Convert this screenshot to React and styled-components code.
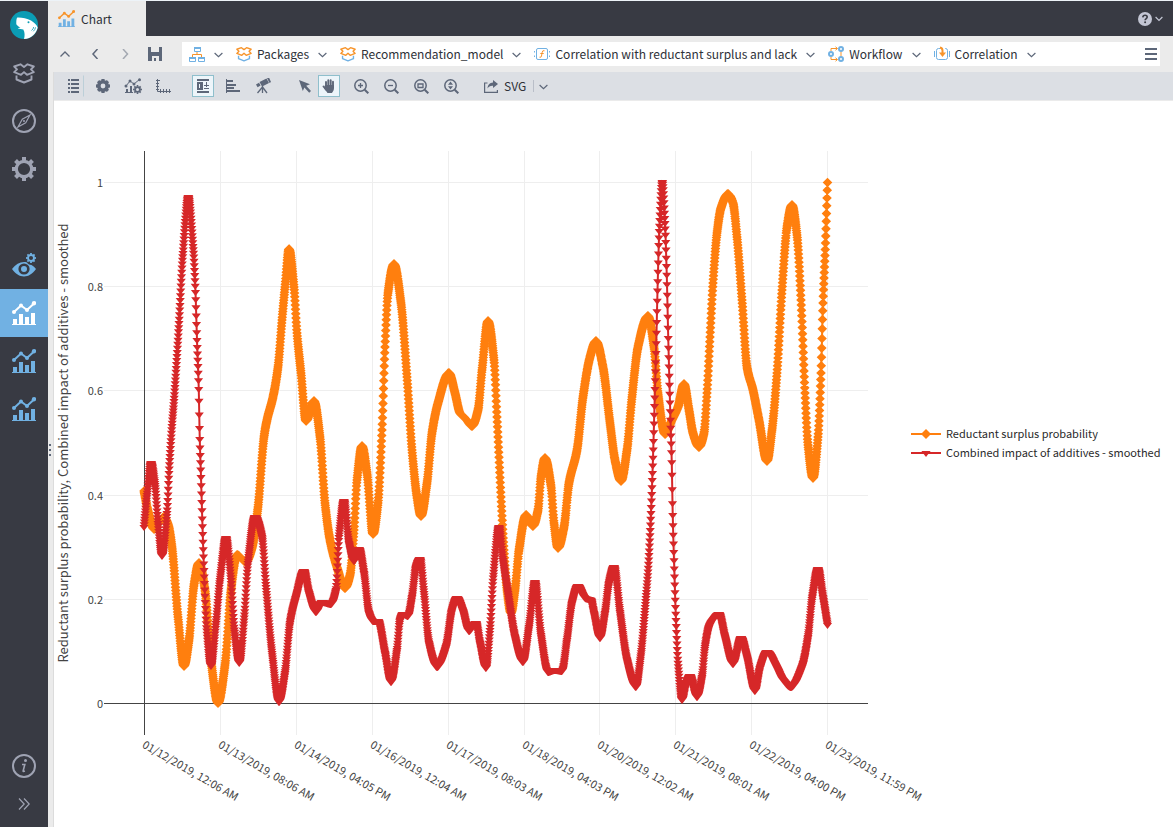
import React from "react";
import styled, { createGlobalStyle } from "styled-components";

const color = {
  dark: "#383a43",
  frame: "#ebebeb",
  bar: "#dcdfe4",
  blue: "#71b1e3",
  orange: "#f7942b",
  slate: "#5d6779",
  muted: "#9fa3b3",
  text: "#2e3138",
  seriesA: "#ff7f0e",
  seriesB: "#d62728",
};
const font = `"Noto Sans CJK SC", "Noto Sans", sans-serif`;

const GlobalStyle = createGlobalStyle`
  *, *::before, *::after { box-sizing: border-box; }
  body { margin: 0; background: #fff; color: ${color.text}; font: 12px/20px ${font}; }
  button { font: inherit; color: inherit; border: 0; padding: 0; margin: 0; background: none; cursor: pointer; }
  svg { display: block; flex: none; }
`;

/* ---------- layout ---------- */

const Page = styled.div`
  display: flex;
  min-height: 100vh;
  border-top: 1px solid #edf3f8;
`;
const Sidebar = styled.nav`
  display: flex;
  flex-direction: column;
  flex: 0 0 48px;
  padding-bottom: 9px;
  background: ${color.dark};
`;
const SideButton = styled.button`
  display: flex;
  align-items: center;
  justify-content: center;
  height: ${(p) => (p.$short ? 28 : 48)}px;
  color: ${(p) => (p.$active ? "#fff" : p.$tool ? color.blue : color.muted)};
  background: ${(p) => (p.$active ? color.blue : "transparent")};
`;
const SideGap = styled.div`
  height: 48px;
  flex: ${(p) => (p.$grow ? "1 0 0px" : "none")};
`;
const Main = styled.div`
  display: flex;
  flex-direction: column;
  flex: 1;
  min-width: 0;
  background: ${color.frame};
`;
const TitleBar = styled.header`
  display: flex;
  justify-content: space-between;
  align-items: stretch;
  height: 35px;
  padding-right: 10px;
  background: ${color.dark};
`;
const Tab = styled.button`
  display: flex;
  align-items: center;
  gap: 6px;
  width: 98px;
  padding-left: 10px;
  background: ${color.frame};
`;
const HelpButton = styled.button`
  display: flex;
  align-items: center;
  gap: 3px;
  color: #c3c6d4;
`;
const PathRow = styled.div`
  display: flex;
  align-items: center;
  height: 36px;
  padding: 0 13px 0 9px;
`;
const NavButtons = styled.div`
  display: flex;
  align-items: center;
  gap: 14px;
  width: 125px;
  color: ${color.slate};
`;
const NavButton = styled.button`
  display: flex;
  justify-content: center;
  width: 16px;
  opacity: ${(p) => (p.$faint ? 0.5 : 1)};
`;
const PathBox = styled.nav`
  display: flex;
  align-items: center;
  flex: 1;
  min-width: 0;
  height: 24px;
  gap: 13px;
  padding: 0 3px 0 7px;
  background: #fff;
`;
const Crumb = styled.div`
  display: flex;
  align-items: center;
  gap: 9px;
  white-space: nowrap;
  color: ${color.slate};
`;
const CrumbLink = styled.a`
  display: flex;
  align-items: center;
  gap: 5px;
  color: ${color.text};
  text-decoration: none;
`;
const MenuButton = styled.button`
  margin-left: auto;
  color: ${color.slate};
`;
const Body = styled.div`
  display: flex;
  flex: 1;
`;
const Splitter = styled.div`
  display: flex;
  flex-direction: column;
  justify-content: center;
  gap: 3px;
  flex: 0 0 6px;
  padding-left: 1px;
  border-right: 1px solid #dcdcdc;
`;
const Dot = styled.span`
  width: 2px;
  height: 2px;
  background: ${color.slate};
`;
const Editor = styled.div`
  display: flex;
  flex-direction: column;
  flex: 1;
  min-width: 0;
`;
const Toolbar = styled.div`
  display: flex;
  align-items: center;
  height: 29px;
  padding-left: 8px;
  background: ${color.bar};
  border-bottom: 1px solid ${color.frame};
  color: ${color.slate};
`;
const ToolGroup = styled.div`
  display: flex;
  align-items: center;
  gap: ${(p) => (p.$tight ? 2 : 8)}px;
  margin-right: ${(p) => p.$after || 0}px;
`;
const ToolButton = styled.button`
  display: flex;
  align-items: center;
  justify-content: center;
  width: 22px;
  height: 22px;
  border: 1px solid ${(p) => (p.$on ? "#8fbfcc" : "transparent")};
  border-right-color: ${(p) => (p.$on ? "#8fbfcc" : p.$divided ? "#bccfd8" : "transparent")};
  background: ${(p) => (p.$on ? "#edf5fa" : "transparent")};
`;
const ExportButton = styled.button`
  display: flex;
  align-items: center;
  gap: 6px;
  padding-right: 7px;
  color: ${color.text};
`;
const ExportMenu = styled.button`
  display: flex;
  align-items: center;
  height: 12px;
  padding-left: 5px;
  border-left: 1px solid #b9bec8;
`;
const ChartPanel = styled.main`
  display: flex;
  align-items: flex-start;
  flex: 1;
  background: #fff;
`;
const Plot = styled.svg`
  flex: 1 1 0;
  min-width: 0;
  height: auto;
  overflow: visible;
  font-family: ${font};
  fill: #444;
`;
const Legend = styled.ul`
  flex: 0 0 262px;
  margin: 0;
  padding: 323px 0 0;
  list-style: none;
  font-size: 11px;
  line-height: 19px;
  color: #2a2a2a;
`;
const LegendItem = styled.li`
  display: flex;
  align-items: center;
  gap: 5px;
  white-space: nowrap;
`;

/* ---------- icons ---------- */

const Svg = ({ w = 16, h = w, children, ...rest }) => (
  <svg width={w} height={h} viewBox={`0 0 ${w} ${h}`} fill="none" aria-hidden="true" {...rest}>
    {children}
  </svg>
);
const Chevron = ({ size = 9 }) => (
  <Svg w={size} h={9} stroke="currentColor" strokeWidth="1.2">
    <path d={size === 9 ? "M.6 3l3.9 3.6L8.4 3" : "M.6 3l3.4 3.4L7.4 3"} />
  </Svg>
);
const Shark = () => (
  <Svg w={28}>
    <circle cx="14" cy="14" r="14" fill="#0b9cb4" />
    <path
      fill="#fff"
      d="M6.3 13.2C6.2 10 6.4 7.600 7.300 6.500C11.500 6.300 17 7.300 21 9.500C24.500 11.500 27 14.500 27.700 16.500C26.700 22 21.500 27.800 14 28C14.800 25.500 15 21.500 13.300 18.600C11.500 18.100 9.500 18 7.800 17.600C8 17 9 16.800 10.500 16.700C9 15.500 7.300 14.800 6.300 13.200Z"
    />
    <circle cx="18.500" cy="11.300" r="1" fill="#0b9cb4" />
    <path d="M21.500 19.500q2-1.500 2.200-3.500M23.300 20.300q2-1.800 2.200-4" stroke="#0b9cb4" strokeWidth=".8" />
  </Svg>
);
const BoxIcon = ({ top, side, w = 16 }) => (
  <svg width={w} height={w} viewBox="0 0 22 22" fill="none" strokeWidth="1.900" strokeLinejoin="round" aria-hidden="true">
    <path stroke={side} d="M3.500 13.500v4L11 20.500l7.500-3v-4" />
    <path stroke={top} d="M11 5 7.500 2.300 1.200 4.500 4 7.300 1.200 10.200 8 12.800l3-2.700 3 2.700 6.800-2.600L18 7.300l2.800-2.800-6.300-2.200z" />
  </svg>
);
const Compass = () => (
  <Svg w={24}>
    <circle cx="12" cy="12" r="11" stroke="currentColor" strokeWidth="2" />
    <path d="M18 6l-4.300 7.700L6 18l4.300-7.700z" stroke="currentColor" strokeWidth="1.200" />
    <circle cx="12" cy="12" r="1" fill="currentColor" />
  </Svg>
);
const teeth = (c, r, w, h) =>
  [0, 45, 90, 135, 180, 225, 270, 315].map((a) => (
    <rect key={a} x={c - w / 2} y={c - r} width={w} height={h} fill="currentColor" transform={`rotate(${a} ${c} ${c})`} />
  ));
const Gear = () => (
  <Svg w={24}>
    <circle cx="12" cy="12" r="7.700" stroke="currentColor" strokeWidth="3.200" />
    {teeth(12, 12, 4, 3.500)}
  </Svg>
);
const Eye = () => (
  <Svg w={24}>
    <path
      fillRule="evenodd"
      fill="currentColor"
      d="M0 16C3.500 11.500 7.500 9 12 9c1 0 2 .1 3 .4.8 1.600 2.200 2.400 4.500 2.500C21.300 13 22.800 14.400 24 16c-3.500 4.800-7.500 7.500-12 7.500S3.500 20.800 0 16zm12-5.600a5.600 5.600 0 1 0 0 11.200 5.600 5.600 0 0 0 0-11.200z"
    />
    <circle cx="12" cy="16" r="3" fill="currentColor" />
    <g transform="translate(14 0)">
      <circle cx="5" cy="5" r="3" stroke="currentColor" strokeWidth="1.900" />
      {teeth(5, 5, 1.800, 1.500)}
    </g>
  </Svg>
);
const ChartIcon = ({ w = 24, line = "currentColor", bars = "currentColor" }) => (
  <svg width={w} height={w} viewBox="0 0 24 24" fill="none" aria-hidden="true">
    <path d="M2 11l7-6.500L15 9l7-6.500" stroke={line} strokeWidth="2" />
    <g fill={line}>
      <circle cx="2" cy="11" r="2" />
      <circle cx="9" cy="4.500" r="2" />
      <circle cx="15" cy="9" r="2" />
      <circle cx="22" cy="2.200" r="2.200" />
    </g>
    <path fill={bars} d="M1 18h4v5H1zM7 13h4v10H7zM13 16h4v7h-4zM19 12h4v11h-4zM0 23h24v1H0z" />
  </svg>
);
const Info = () => (
  <Svg w={24}>
    <circle cx="12" cy="12" r="11" stroke="currentColor" strokeWidth="2" />
    <circle cx="13.500" cy="6.500" r="1.500" fill="currentColor" />
    <path d="M10 10.500h2.800l-1.700 6.500q0 .8 1.800 0" stroke="currentColor" strokeWidth="1.600" />
  </Svg>
);
const Expand = () => (
  <Svg w={12} stroke="currentColor" strokeWidth="1.200">
    <path d="M1 .5L6.200 6 1 11.500M6 .5L11.200 6 6 11.500" />
  </Svg>
);
const Help = () => (
  <Svg w={14}>
    <circle cx="7" cy="7" r="7" fill="currentColor" />
    <path d="M4.800 5.300q.2-2 2.300-2 2.100 0 2.100 1.800 0 1-1.200 1.700-.9.600-.9 1.500" stroke={color.dark} strokeWidth="1.600" />
    <circle cx="7.100" cy="10.300" r="1" fill={color.dark} />
  </Svg>
);
const Save = () => (
  <Svg w={14}>
    <path fill="currentColor" fillRule="evenodd" d="M0 0h3v5h8V0h3v14H0zM4 9v5h2v-3h2v3h3V9z" />
  </Svg>
);
const Network = () => (
  <Svg>
    <path d="M8 6v3M3.500 11V8.500h9V11" stroke={color.orange} />
    <g stroke={color.blue}>
      <path d="M5.500 1.500h6v4h-6zM.5 11.500h6v4h-6zM9.500 11.500h6v4h-6z" />
      <path strokeWidth="2" d="M5 2h7M0 12h7M9 12h7" />
    </g>
  </Svg>
);
const Fn = () => (
  <Svg>
    <rect x="2.500" y="2.500" width="11" height="11" rx="1.500" stroke={color.blue} />
    <path d="M.5 5v1.500M.5 9.500V11M15.500 5v1.500M15.500 9.500V11" stroke={color.blue} />
    <path d="M10.500 4.800q-2-.8-2.300 1.400L7.500 10q-.3 1.800-2 1.200M6.300 7.500h3.400" stroke={color.orange} />
  </Svg>
);
const Flow = () => (
  <Svg>
    <path d="M3 5V2.500h6M3 11v2.500h6M13 5v6M7.500.8 9.500 2.500 7.500 4.200M7.500 11.800l2 1.700-2 1.700" stroke={color.orange} />
    <g stroke={color.blue} strokeWidth="2">
      <circle cx="3" cy="8" r="2" />
      <circle cx="13" cy="3" r="2" />
      <circle cx="13" cy="13" r="2" />
    </g>
  </Svg>
);
const Node = () => (
  <Svg>
    <path d="M6 2.500H4.500a2 2 0 0 0-2 2v7a2 2 0 0 0 2 2h7a2 2 0 0 0 2-2v-7a2 2 0 0 0-2-2H11M.5 5v6M15.500 5v6" stroke={color.blue} />
    <path d="M6 1.500q2.500.5 2.500 3V8" stroke={color.orange} strokeWidth="2" />
    <path d="M5 6.500h7L8.500 11z" fill={color.orange} />
  </Svg>
);
const Burger = () => (
  <Svg w={12}>
    <path fill="currentColor" d="M0 0h12v2H0zM0 5h12v2H0zM0 10h12v2H0z" />
  </Svg>
);
const ListIcon = () => (
  <Svg w={12} h={14}>
    <path fill="currentColor" d="M1 0h2v2H1zM1 4h2v2H1zM1 8h2v2H1zM1 12h2v2H1zM4 0h8v2H4zM4 4h8v2H4zM4 8h8v2H4zM4 12h8v2H4z" />
  </Svg>
);
const SmallGear = () => (
  <Svg w={14}>
    <circle cx="7" cy="7" r="4.200" stroke="currentColor" strokeWidth="3.600" />
    {teeth(7, 7, 3.200, 3)}
  </Svg>
);
const ChartGear = () => (
  <Svg w={18} h={16}>
    <path d="M2 8l4-5 4 3 6-5" stroke="currentColor" />
    <g fill="currentColor">
      <circle cx="2" cy="8" r="1.500" />
      <circle cx="6" cy="3" r="1.500" />
      <circle cx="10" cy="6" r="1.500" />
      <circle cx="15.500" cy="1.700" r="1.500" />
      <path d="M2 11h2v4H2zM6 8h2v7H6zM1 14h8v1H1z" />
    </g>
    <g transform="translate(9 7)">
      <circle cx="4.500" cy="4.500" r="2.400" stroke="currentColor" strokeWidth="1.800" />
      {teeth(4.500, 4.500, 1.600, 1.800)}
    </g>
  </Svg>
);
const Axis = () => (
  <Svg w={15} stroke="currentColor">
    <path d="M1.500 0v12.500H15M0 1.500h4M0 4.500h3M0 7.500h3M0 10.500h3M4.500 10v4M7.500 10v4M10.500 10v4M13.500 10v4" />
  </Svg>
);
const Frame = () => (
  <Svg w={14}>
    <path fill="currentColor" d="M1 0h12v2H1zM1 12h12v2H1zM1 3h6v8H1zM10 3h1v3h2v1h-2v1h-1V7H8V6h2zM8 9h5v1H8z" />
    <path fill="#edf5fa" d="M3 5h1v4H3z" />
  </Svg>
);
const Bars = () => (
  <Svg w={14}>
    <path fill="currentColor" d="M0 0h1v14H0zM1 1h6v2H1zM1 5h9v2H1zM1 8h7v2H1zM1 11h13v2H1z" />
  </Svg>
);
const Telescope = () => (
  <Svg w={16}>
    <path fill="currentColor" d="M1 6.500l3-1.700 1.600 2.700-3 1.700zM4.500 4l7-3.600L14 5 7 8.500zM12 0l2-.5L16 4l-1.500 1z" />
    <path d="M7.500 8v7M7.500 9l-5 6M7.500 9l4.500 6" stroke="currentColor" strokeWidth="1.300" />
  </Svg>
);
const Pointer = () => (
  <Svg w={12} h={13}>
    <path fill="currentColor" d="M0 0l11 4.200-3.800 1.600L12 11l-1.800 1.800L5.400 7.500 3.800 11z" />
  </Svg>
);
const Hand = () => (
  <Svg w={14}>
    <path
      d="M4 8V3M6.300 7V1.200M8.700 7V1.200M11 8V2.800M1.500 7.500L4 10.500"
      stroke="currentColor"
      strokeWidth="1.900"
      strokeLinecap="round"
    />
    <path fill="currentColor" d="M3 6h9v3c0 2-1 3.500-2 5H5.500C4.500 12.500 3 11 2 9z" />
  </Svg>
);
const Lens = ({ children }) => (
  <Svg w={15} stroke="currentColor">
    <circle cx="6.500" cy="6.500" r="5.700" strokeWidth="1.500" />
    <path d="M10.700 10.700l3.600 3.600" strokeWidth="2" />
    {children}
  </Svg>
);
const Share = () => (
  <Svg w={14} h={13} color={color.slate}>
    <path d="M3.500 3H.6v9.400h12.800V10" stroke="currentColor" strokeWidth="1.200" />
    <path fill="currentColor" d="M9 0l5 4-5 4V5.700C6.500 5.500 4.800 6.300 3.500 8.500 3.700 4.500 5.800 2.600 9 2.400z" />
  </Svg>
);

/* ---------- chart ---------- */

// Extremes and inflections of each smoothed signal, as [x, y] in plot units.
const surplus = [
  [144, 491], [149, 515], [154, 529], [159, 522], [164, 517], [168, 524], [172, 547], [178, 617], [184, 666], [189, 640], [194, 585], [199, 563],
  [205, 590], [211, 660], [218, 703], [225, 665], [231, 590], [237, 555], [246, 562], [252, 548], [258, 507], [264, 437], [267, 420], [273, 397],
  [278, 367], [282, 320], [285, 287], [289, 249], [294, 287], [297, 333], [301, 373], [306, 421], [314, 401], [320, 437], [325, 503],
  [330, 540], [337, 567], [345, 588], [350, 575], [354, 530], [357, 480], [362, 446], [367, 473], [373, 534], [378, 503], [382, 430],
  [385, 347], [388, 293], [394, 264], [401, 303], [407, 377], [412, 450], [417, 497], [421, 516], [427, 483], [432, 433], [438, 403],
  [449, 373], [455, 393], [460, 413], [466, 419], [472, 426], [478, 410], [482, 370], [488, 321], [494, 360], [497, 417], [501, 497],
  [504, 550], [507, 590], [511, 613], [515, 590], [519, 550], [526, 515], [533, 526], [538, 510], [541, 477], [545, 458], [551, 486],
  [554, 523], [558, 548], [564, 527], [569, 483], [577, 450], [583, 397], [590, 357], [596, 341], [603, 367], [610, 423], [615, 460],
  [621, 481], [627, 450], [632, 397], [638, 347], [648, 316], [654, 347], [658, 393], [665, 434], [672, 420], [678, 407], [684, 384],
  [689, 410], [693, 433], [699, 447], [704, 433], [707, 393], [710, 337], [713, 283], [717, 233], [721, 208], [728, 194], [733, 203],
  [737, 237], [742, 300], [747, 367], [753, 390], [759, 420], [767, 461], [772, 430], [777, 373], [782, 290], [787, 227], [792, 205],
  [797, 235], [801, 300], [805, 393], [808, 445], [813, 478], [818, 437], [821, 373], [823, 303], [825.500, 243], [827.500, 182.500],
];
const additives = [
  [144, 527], [147, 495], [151, 463], [155, 485], [158, 523], [162, 556], [167, 513], [169, 473], [171.700, 430], [174.300, 397], [179, 323],
  [182.700, 257], [188.300, 197], [193.300, 250], [195.300, 287], [197, 340], [198.700, 387], [199.700, 437], [201, 477], [202.300, 520],
  [204, 570], [206.700, 630], [211, 666], [216, 623], [220, 580], [226, 538], [231, 580], [234.300, 630], [239.300, 663], [244.300, 617],
  [248, 563], [255, 517], [262, 537], [266, 587], [272, 653], [279, 702], [285, 673], [290, 623], [296, 597], [304, 571], [309, 593],
  [316, 612], [322, 602], [331, 604], [336, 590], [339, 537], [344, 501], [349, 543], [354, 561], [359, 549], [364, 573], [369, 613],
  [373, 621], [378, 621], [385, 653], [391, 682], [397, 650], [400, 620], [403, 614], [408, 616], [412, 597], [416, 567], [420, 559],
  [424, 593], [429, 643], [437, 667], [446, 647], [452, 610], [457, 598], [463, 611], [469, 631], [476, 623], [480, 643], [486, 668],
  [490, 630], [493.300, 577], [499, 527], [503, 560], [508, 593], [515, 637], [523, 662], [529, 627], [535, 582], [541, 635], [548, 672],
  [555, 670], [562, 671], [567, 640], [572, 603], [578, 586], [585, 598], [591, 600], [594, 613], [600, 638], [605, 613], [609, 583],
  [614, 567], [620, 612], [627, 660], [636, 687], [640.700, 657], [645, 610], [648.300, 567], [650.700, 520], [652.700, 467],
  [654.300, 413], [656, 353], [657.700, 283], [659.300, 230], [662.300, 182], [665, 223], [666.700, 273], [668.300, 340], [670.300, 413],
  [671.700, 460], [672.700, 513], [674.300, 570], [676, 620], [678.300, 667], [682, 700], [686, 684], [690, 676], [697, 697], [702, 677],
  [705, 647], [709, 627], [713, 620], [719, 614], [725, 637], [733, 664], [741, 638], [747, 657], [755, 691], [760, 668], [767, 652],
  [777, 668], [783, 680], [791, 687], [802, 667], [808, 637], [812.300, 597], [818, 569], [823, 597], [827.500, 625],
];

// Monotone cubic resampling, so that no overshoot appears between two points.
function resample(points, step) {
  const n = points.length;
  const d = points.slice(1).map(([x, y], i) => (y - points[i][1]) / (x - points[i][0]));
  const m = points.map((_, i) => {
    if (i === 0) return d[0];
    if (i === n - 1) return d[n - 2];
    return d[i - 1] * d[i] <= 0 ? 0 : (2 * d[i - 1] * d[i]) / (d[i - 1] + d[i]);
  });
  const out = [];
  let i = 0;
  for (let x = points[0][0]; x <= points[n - 1][0]; x += step) {
    while (i < n - 2 && x > points[i + 1][0]) i += 1;
    const h = points[i + 1][0] - points[i][0];
    const t = (x - points[i][0]) / h;
    const y =
      (1 + 2 * t) * (1 - t) ** 2 * points[i][1] +
      t * (1 - t) ** 2 * h * m[i] +
      t * t * (3 - 2 * t) * points[i + 1][1] +
      t * t * (t - 1) * h * m[i + 1];
    out.push([x.toFixed(2), y.toFixed(2)]);
  }
  return out;
}
const diamond = "l4.800 4.800 4.800-4.800-4.800-4.800z";
const triangle = "h9.200l-4.600 6z";
const Series = ({ points, stroke, shape, dx, dy }) => {
  const samples = resample(points, 0.25);
  return (
    <g>
      <path d={`M${samples.map((p) => p.join(" ")).join("L")}`} fill="none" stroke={stroke} strokeWidth="2" />
      <path d={samples.map(([x, y]) => `M${(x - dx).toFixed(2)} ${(y - dy).toFixed(2)}${shape}`).join("")} fill={stroke} />
    </g>
  );
};
const Key = ({ stroke, children }) => (
  <svg width="30" height="12" viewBox="0 0 30 12" fill={stroke} aria-hidden="true">
    <path d="M0 6h30" stroke={stroke} strokeWidth="2" />
    {children}
  </svg>
);

const yTicks = [
  ["1", 182.5], ["0.8", 286.5], ["0.6", 390.5], ["0.4", 495.5], ["0.2", 599.5], ["0", 703.5],
];
const xTicks = [
  ["01/12/2019, 12:06 AM", 144.5], ["01/13/2019, 08:06 AM", 220.5], ["01/14/2019, 04:05 PM", 296.5],
  ["01/16/2019, 12:04 AM", 372.5], ["01/17/2019, 08:03 AM", 448.5], ["01/18/2019, 04:03 PM", 524.5],
  ["01/20/2019, 12:02 AM", 599.5], ["01/21/2019, 08:01 AM", 675.5], ["01/22/2019, 04:00 PM", 751.5],
  ["01/23/2019, 11:59 PM", 827.5],
];
const yTitle = "Reductant surplus probability, Combined impact of additives - smoothed";

const CombinedChart = () => (
  <Plot viewBox="54 101 857 726" role="img" aria-label={yTitle}>
    {yTicks.map(([label, y]) => (
      <g key={label}>
        <path d={`M104 ${y}H868`} stroke={label === "0" ? "#444" : "#eee"} />
        <text x="103" y={y + 4} fontSize="11" textAnchor="end">{label}</text>
      </g>
    ))}
    {xTicks.map(([label, x], i) => (
      <g key={label}>
        <path d={`M${x} 151V735`} stroke={i === 0 ? "#444" : "#eee"} />
        <text fontSize="11" transform={`translate(${x - 3} 747) rotate(30)`}>{label}</text>
      </g>
    ))}
    <path d="M104 703.500H868" stroke="#444" />
    <text fontSize="13" textAnchor="middle" transform="translate(68 443) rotate(-90)">{yTitle}</text>
    <Series points={surplus} stroke={color.seriesA} shape={diamond} dx={4.8} dy={0} />
    <Series points={additives} stroke={color.seriesB} shape={triangle} dx={4.6} dy={2} />
  </Plot>
);

/* ---------- page ---------- */

const crumbs = [
  ["Packages", <BoxIcon top={color.orange} side={color.blue} />],
  ["Recommendation_model", <BoxIcon top={color.orange} side={color.blue} />],
  ["Correlation with reductant surplus and lack", <Fn />],
  ["Workflow", <Flow />],
  ["Correlation", <Node />],
];

export default function App() {
  return (
    <>
      <GlobalStyle />
      <Page>
        <Sidebar aria-label="Main">
          <SideButton aria-label="Home"><Shark /></SideButton>
          <SideButton aria-label="Packages"><BoxIcon top="currentColor" side="currentColor" w={22} /></SideButton>
          <SideButton aria-label="Explore"><Compass /></SideButton>
          <SideButton aria-label="Settings"><Gear /></SideButton>
          <SideGap />
          <SideButton $tool aria-label="View settings"><Eye /></SideButton>
          <SideButton $active aria-label="Chart 1"><ChartIcon /></SideButton>
          <SideButton $tool aria-label="Chart 2"><ChartIcon /></SideButton>
          <SideButton $tool aria-label="Chart 3"><ChartIcon /></SideButton>
          <SideGap $grow />
          <SideButton aria-label="About"><Info /></SideButton>
          <SideButton $short aria-label="Expand"><Expand /></SideButton>
        </Sidebar>
        <Main>
          <TitleBar>
            <Tab>
              <ChartIcon w={17} line={color.orange} bars={color.blue} />
              Chart
            </Tab>
            <HelpButton aria-label="Help"><Help /><Chevron size={8} /></HelpButton>
          </TitleBar>
          <PathRow>
            <NavButtons>
              <NavButton aria-label="Up">
                <Svg w={10} stroke="currentColor" strokeWidth="1.300"><path d="M.5 7.500L5 3l4.500 4.500" /></Svg>
              </NavButton>
              <NavButton aria-label="Back">
                <Svg w={10} stroke="currentColor" strokeWidth="1.500"><path d="M7.500 0L3 5l4.500 5" /></Svg>
              </NavButton>
              <NavButton $faint aria-label="Forward">
                <Svg w={10} stroke="currentColor" strokeWidth="1.500"><path d="M3 0l4.500 5L3 10" /></Svg>
              </NavButton>
              <NavButton aria-label="Save"><Save /></NavButton>
            </NavButtons>
            <PathBox aria-label="Path">
              <Crumb>
                <CrumbLink href="#root" aria-label="Root"><Network /></CrumbLink>
                <button aria-label="Open root menu"><Chevron /></button>
              </Crumb>
              {crumbs.map(([label, icon]) => (
                <Crumb key={label}>
                  <CrumbLink href="#path">{icon}{label}</CrumbLink>
                  <button aria-label={`Open ${label} menu`}><Chevron /></button>
                </Crumb>
              ))}
              <MenuButton aria-label="Menu"><Burger /></MenuButton>
            </PathBox>
          </PathRow>
          <Body>
            <Splitter><Dot /><Dot /><Dot /></Splitter>
            <Editor>
              <Toolbar role="toolbar" aria-label="Chart tools">
                <ToolGroup $after={18}>
                  <ToolButton $divided aria-label="Fields"><ListIcon /></ToolButton>
                  <ToolButton aria-label="Settings"><SmallGear /></ToolButton>
                  <ToolButton aria-label="Series settings"><ChartGear /></ToolButton>
                  <ToolButton aria-label="Axes"><Axis /></ToolButton>
                </ToolGroup>
                <ToolGroup $after={20}>
                  <ToolButton $on aria-label="Legend"><Frame /></ToolButton>
                  <ToolButton aria-label="Orientation"><Bars /></ToolButton>
                  <ToolButton aria-label="Overview"><Telescope /></ToolButton>
                </ToolGroup>
                <ToolGroup $tight $after={10}>
                  <ToolButton aria-label="Select"><Pointer /></ToolButton>
                  <ToolButton $on aria-label="Pan"><Hand /></ToolButton>
                </ToolGroup>
                <ToolGroup $after={22}>
                  <ToolButton aria-label="Zoom in"><Lens><path strokeWidth="1.300" d="M4 6.500h5M6.500 4v5" /></Lens></ToolButton>
                  <ToolButton aria-label="Zoom out"><Lens><path strokeWidth="1.300" d="M4 6.500h5" /></Lens></ToolButton>
                  <ToolButton aria-label="Zoom to area"><Lens><path strokeWidth="1.300" d="M4 5h5v3.500H4z" /></Lens></ToolButton>
                  <ToolButton aria-label="Fit height">
                    <Lens><path fill="currentColor" stroke="none" d="M6.500 2.500L9 5.700H4zM6.500 10.500L4 7.300h5z" /></Lens>
                  </ToolButton>
                </ToolGroup>
                <ExportButton><Share />SVG</ExportButton>
                <ExportMenu aria-label="Export format"><Chevron /></ExportMenu>
              </Toolbar>
              <ChartPanel>
                <CombinedChart />
                <Legend>
                  <LegendItem>
                    <Key stroke={color.seriesA}><path d="M15 1l5 5-5 5-5-5z" /></Key>
                    Reductant surplus probability
                  </LegendItem>
                  <LegendItem>
                    <Key stroke={color.seriesB}><path d="M10.400 4h9.200L15 10z" /></Key>
                    Combined impact of additives - smoothed
                  </LegendItem>
                </Legend>
              </ChartPanel>
            </Editor>
          </Body>
        </Main>
      </Page>
    </>
  );
}
